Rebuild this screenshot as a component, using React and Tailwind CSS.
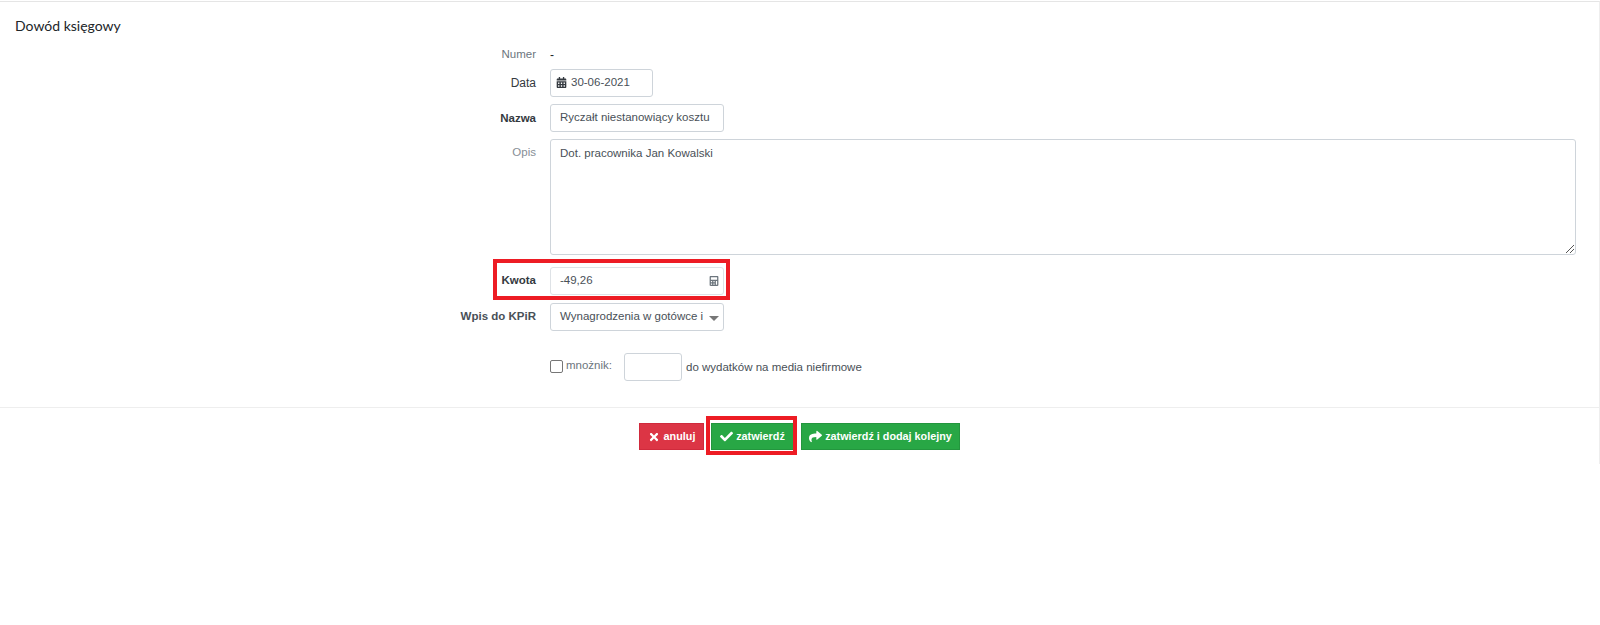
import React from 'react';
import { FaCalendarAlt, FaCalculator, FaTimes, FaCheck, FaShare } from 'react-icons/fa';

const inputClass = 'h-[28px] border border-[#ced4da] rounded-[3px] bg-white text-[11.5px] text-[#495057] flex items-center';

const Row = ({ label, labelClass = 'text-[#6c757d]', className = '', children }) => (
  <div className={`flex ${className}`}>
    <div className={`w-[536px] shrink-0 text-right text-[11.5px] leading-[14px] ${labelClass}`}>{label}</div>
    <div className="ml-[14px] flex-1 min-w-0">{children}</div>
  </div>
);

const App = () => {
  return (
    <div className="w-full h-[625px] bg-white font-['Liberation_Sans',Arial,sans-serif]">
      <div className="h-[463px] border-t border-t-[#e5e5e5] mt-px border-r border-r-[#eeeeee]">
        <h2 className="pl-[15px] pt-[15px] text-[14px] leading-[18px] text-[#212529] font-['Lato','Noto_Sans',sans-serif]">Dowód księgowy</h2>

        {/* Form */}
        <div className="relative pr-[23px] mt-[12px] pb-[26px] border-b border-b-[#eeeeee]">
          <Row label="Numer" className="items-center h-[14px]">
            <span className="text-[12px] text-[#212529]">-</span>
          </Row>

          <Row label="Data" labelClass="text-[#343a40] text-[12px]" className="mt-[8px] items-center">
            <div className={`${inputClass} w-[103px] pl-[5px] gap-[4px]`}>
              <FaCalendarAlt className="text-[#343a40] text-[11px] -mt-[1px]" />
              <span>30-06-2021</span>
            </div>
          </Row>

          <Row label="Nazwa" labelClass="font-bold text-[#343a40]" className="mt-[7px] items-center">
            <div className={`${inputClass} w-[174px] pl-[9px]`}>Ryczałt niestanowiący kosztu</div>
          </Row>

          <Row label="Opis" labelClass="pt-[6px] text-[#868e96]" className="mt-[7px]">
            <div className="relative h-[116px] border border-[#ced4da] rounded-[3px] pl-[9px] pt-[6px] text-[11.5px] leading-[14px] text-[#495057]">
              Dot. pracownika Jan Kowalski
              {/* textarea resize grip */}
              <svg className="absolute right-0 bottom-0" width="10" height="10" viewBox="0 0 10 10">
                <path d="M1 9L9 1M5 9L9 5" stroke="#555" strokeWidth="1" fill="none" />
              </svg>
            </div>
          </Row>

          <div className="relative mt-[12px]">
            <Row label="Kwota" labelClass="font-bold text-[#343a40] pb-[2px]" className="items-center">
              <div className={`${inputClass} w-[174px] pl-[9px] justify-between pr-[4px] border-[#dee2e6]`}>
                <span>-49,26</span>
                <FaCalculator className="text-[#6c757d] text-[10px]" />
              </div>
            </Row>
            <div className="absolute left-[493px] top-[-8px] w-[237px] h-[41px] border-[4px] border-[#ed1c24] pointer-events-none"></div>
          </div>

          <Row label="Wpis do KPiR" labelClass="font-bold text-[#495057] pb-[2px]" className="mt-[8px] items-center">
            <div className={`${inputClass} w-[174px] pl-[9px] relative`}>
              <span>Wynagrodzenia w gotówce i</span>
              <span className="absolute right-[4px] top-[12px] w-0 h-0 border-l-[5px] border-r-[5px] border-t-[5px] border-l-transparent border-r-transparent border-t-[#777]"></span>
            </div>
          </Row>

          <div className="flex items-center ml-[550px] mt-[22px] text-[11.5px]">
            <span className="w-[13px] h-[13px] border border-[#767676] rounded-[2px] bg-white -mt-[2px]"></span>
            <span className="ml-[3px] text-[#6c757d] -mt-[2px]">mnożnik:</span>
            <div className="ml-[12px] w-[58px] h-[28px] border border-[#ced4da] rounded-[3px]"></div>
            <span className="ml-[4px] pt-[2px] text-[#495057]">do wydatków na media niefirmowe</span>
          </div>
        </div>

        {/* Buttons */}
        <div className="relative flex justify-center pt-[15px] gap-[7px] text-[10.8px] font-bold text-white">
          <button className="w-[65px] h-[27px] bg-[#dc3545] border border-[#d02a3c] flex items-center justify-center gap-[4px]">
            <FaTimes className="text-[12px]" /> anuluj
          </button>
          <button className="w-[83px] h-[27px] bg-[#28a745] border border-[#23963e] flex items-center justify-center gap-[3px]">
            <FaCheck className="text-[13px]" /> zatwierdź
          </button>
          <button className="w-[159px] h-[27px] bg-[#28a745] border border-[#23963e] flex items-center justify-center gap-[3px]">
            <FaShare className="text-[13px]" /> zatwierdź i dodaj kolejny
          </button>
          <div className="absolute left-[706px] top-[8px] w-[91px] h-[39px] border-[4px] border-[#ed1c24] pointer-events-none"></div>
        </div>
      </div>
    </div>
  );
};

export default App;
